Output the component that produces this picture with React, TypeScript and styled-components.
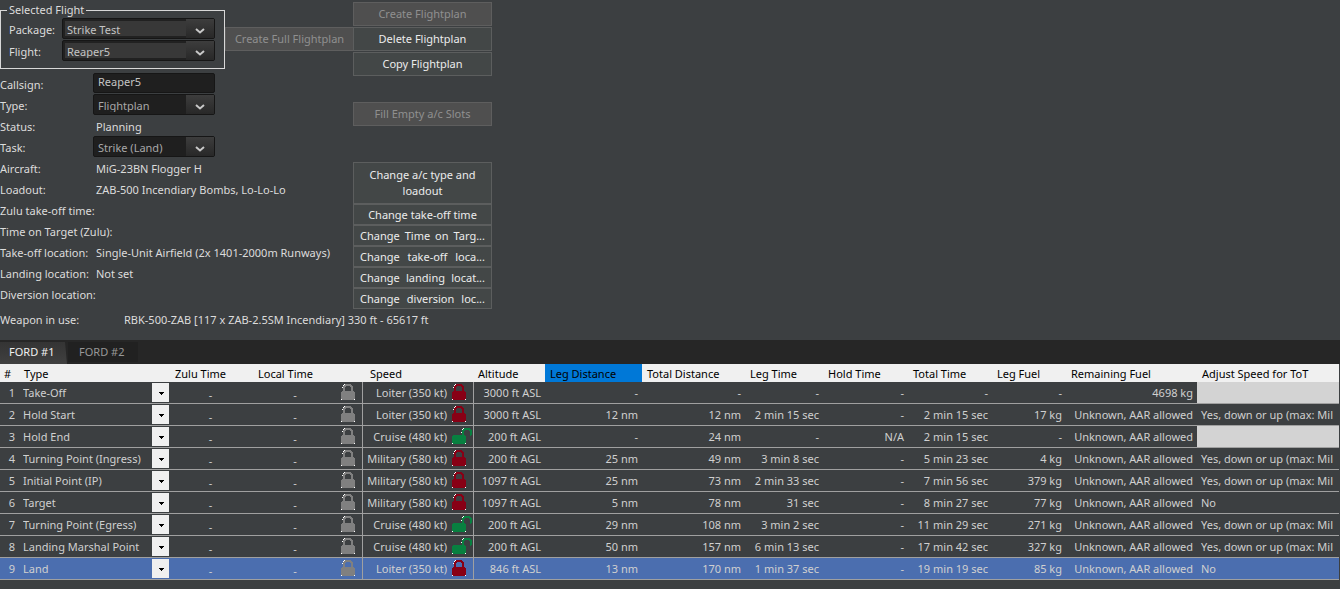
import React, { useState } from "react";
import styled, { createGlobalStyle } from "styled-components";

const color = {
  window: "#3c3f41",
  label: "#dcdcdc",
  cell: "#d0d0d0",
  muted: "#8f8f8f",
  grid: "#a0a0a0",
  selected: "#4b6eaf",
  lockGrey: "#808080",
  lockRed: "#880015",
  lockGreen: "#088040",
};

const Global = createGlobalStyle`
  *, *::before, *::after { box-sizing: border-box; }
  body {
    margin: 0;
    background: ${color.window};
    color: ${color.label};
    font-family: "Noto Sans", "Open Sans", sans-serif;
    font-size: 11px;
    line-height: 21px;
  }
  button, input, select { font: inherit; color: inherit; margin: 0; }
`;

const Page = styled.main`
  min-height: 100vh;
  overflow: hidden;
`;

const Top = styled.section`
  display: flex;
`;

const Details = styled.div`
  width: 353px;
`;

const Selection = styled.div`
  display: flex;
  align-items: flex-start;
  padding-top: 2px;
`;

const Group = styled.fieldset`
  width: 225px;
  margin: 0;
  padding: 0 9px 7px 8px;
  border: 1px solid #d8d8d8;
  display: grid;
  gap: 1px;
`;

const GroupTitle = styled.legend`
  margin-left: -2px;
  padding: 0 2px;
  line-height: 16px;
`;

const GroupRow = styled.div`
  display: grid;
  grid-template-columns: 53px 1fr;
`;

const Label = styled.label`
  line-height: 23px;
  height: 21px;
  white-space: nowrap;
`;

const Combo = styled.div`
  position: relative;
  height: 21px;
`;

const ComboSelect = styled.select<{ $raised?: boolean }>`
  appearance: none;
  display: block;
  width: 100%;
  height: 21px;
  padding: 0 30px 2px 4px;
  border: 1px solid #161616;
  border-radius: 2px;
  outline: 0;
  color: ${(p) => (p.$raised ? "#c4c4c4" : "#a8a8a8")};
  background: ${(p) =>
    p.$raised
      ? "linear-gradient(#383838, #383838) 2px 2px / 130px 15px no-repeat, #212121"
      : "#1f1f1f"};
`;

const ComboArrow = styled.span`
  position: absolute;
  top: 1px;
  right: 1px;
  width: 28px;
  height: 19px;
  display: grid;
  place-items: center;
  padding: 5px 1px 0 0;
  background: linear-gradient(#3d3d3d, #282828);
  pointer-events: none;
`;

const Callsign = styled.input`
  width: 100%;
  height: 20px;
  padding: 0 4px 3px;
  border: 1px solid #161616;
  border-radius: 2px;
  outline: 0;
  color: #c4c4c4;
  background: #1f1f1f;
`;

const Fields = styled.div`
  margin-top: 4px;
`;

const Field = styled.div`
  display: grid;
  grid-template-columns: 93px 122px;
  height: 21px;
`;

const Value = styled.output`
  padding-left: 3px;
  line-height: 23px;
  white-space: nowrap;
`;

const Weapon = styled.div`
  display: grid;
  grid-template-columns: 124px 1fr;
  height: 31px;
  white-space: nowrap;
`;

const Actions = styled.div`
  width: 139px;
  padding-top: 2px;
  display: flex;
  flex-direction: column;
`;

const ActionGroup = styled.div<{ $gap: number; $after?: number }>`
  display: flex;
  flex-direction: column;
  gap: ${(p) => p.$gap}px;
  margin-bottom: ${(p) => p.$after ?? 0}px;
`;

const Button = styled.button<{ $size?: "tall" | "short" }>`
  height: ${(p) => (p.$size === "tall" ? 42 : p.$size === "short" ? 21 : 24)}px;
  padding: 0 7px;
  border: 1px solid #5c5e5e;
  border-radius: 0;
  background: #434747;
  color: #ececec;
  line-height: 16px;
  overflow: hidden;
  &:disabled {
    background: #4f4f4f;
    border-color: #5e5e5e;
    color: ${color.muted};
  }
`;

const FullPlanButton = styled(Button)`
  flex: 1;
  margin-top: 25px;
  border-right: 0;
  padding: 0;
  white-space: nowrap;
`;

const FilledButton = styled(Button)`
  padding: 0 6px;
  text-align: justify;
  text-align-last: justify;
`;

const Tabs = styled.div`
  display: flex;
  align-items: flex-start;
  height: 24px;
  padding-top: 2px;
  background: #262626;
`;

const Tab = styled.button<{ $active: boolean }>`
  width: ${(p) => (p.$active ? 67 : 70)}px;
  height: ${(p) => (p.$active ? 22 : 20)}px;
  margin-right: 1px;
  padding: ${(p) => (p.$active ? "0 0 2px 9px" : "0 0 0 11px")};
  border: 0;
  text-align: left;
  white-space: nowrap;
  line-height: 18px;
  color: ${(p) => (p.$active ? "#f0f0f0" : "#989898")};
  background: ${(p) => (p.$active ? "linear-gradient(#343434, #404040)" : "#212121")};
  clip-path: ${(p) => (p.$active ? "polygon(0 0, 65px 0, 67px 100%, 0 100%)" : "none")};
`;

const TableFrame = styled.div`
  padding-right: 1px;
  overflow: hidden;
`;

const Plan = styled.table`
  width: 100%;
  min-width: 1339px;
  table-layout: fixed;
  border-collapse: separate;
  border-spacing: 0;
`;

const Column = styled.col<{ $width?: number }>`
  width: ${(p) => (p.$width ? `${p.$width}px` : "auto")};
`;

const Head = styled.th<{ $sorted?: boolean; $inset?: number }>`
  height: 18px;
  padding: 1px 0 0 ${(p) => p.$inset ?? 5}px;
  text-align: left;
  font-weight: 400;
  line-height: 17px;
  white-space: nowrap;
  color: #000;
  background: ${(p) => (p.$sorted ? "#0078d7" : "#f0f0f0")};
`;

const Row = styled.tr<{ $selected: boolean }>`
  background: ${(p) => (p.$selected ? color.selected : "transparent")};
  color: ${color.cell};
`;

const Cell = styled.td<{ $align?: "left" | "right"; $blank?: boolean; $ruled?: boolean }>`
  height: 22px;
  padding: ${(p) => (p.$align === "left" ? "0 0 0 4px" : "0 4px 0 0")};
  border-bottom: 1px solid ${color.grid};
  border-right: ${(p) => (p.$ruled ? `1px solid ${color.grid}` : "0")};
  text-align: ${(p) => p.$align ?? "right"};
  line-height: 21px;
  white-space: nowrap;
  overflow: hidden;
  background: ${(p) => (p.$blank ? "#d3d3d3" : "transparent")};
`;

const SpeedCell = styled(Cell)`
  padding-right: 1px;
`;

const ClockCell = styled(Cell)`
  padding-right: 2px;
`;

const TypePicker = styled.div`
  position: relative;
  height: 21px;
`;

const TypeSelect = styled.select`
  appearance: none;
  display: block;
  width: 100%;
  height: 21px;
  padding: 0 18px 0 0;
  border: 0;
  outline: 0;
  background: transparent;
`;

const TypeArrow = styled.span`
  position: absolute;
  top: 1px;
  right: 1px;
  width: 17px;
  height: 19px;
  display: grid;
  place-items: center;
  padding: 2px 0 0 2px;
  background: #f0f0f0;
  pointer-events: none;
`;

const ClockDash = styled.span`
  display: block;
  height: 21px;
  padding-top: 2px;
  text-align: center;
`;

const LocalTime = styled.div`
  display: grid;
  grid-template-columns: 76px 1fr;
  gap: 8px;
  align-items: start;
`;

const Speed = styled.div`
  display: grid;
  grid-template-columns: 1fr 20px;
  gap: 5px;
  align-items: start;
`;

const Icon = styled.svg`
  display: block;
  shape-rendering: crispEdges;
`;

const LockIcon = styled(Icon)`
  margin-top: 2px;
`;

function Chevron() {
  return (
    <svg width="10" height="6" viewBox="0 0 10 6" aria-hidden="true">
      <path d="M1 1 L5 4.5 L9 1" fill="none" stroke="#c8c8c8" strokeWidth="2" />
    </svg>
  );
}

function Triangle() {
  return (
    <Icon width="5" height="3" viewBox="0 0 5 3" aria-hidden="true">
      <path d="M0 0h5v1h-1v1h-1v1h-1v-1h-1v-1h-1z" fill="#000" />
    </Icon>
  );
}

function Lock({ fill }: { fill: string }) {
  return (
    <LockIcon width="20" height="16" viewBox="0 0 20 16" aria-hidden="true">
      <path d="M4 0h6v1h1v1h1v5h1v1h1v7h-1v1H1v-1H0V8h1V7h1V2h1V1h1z M5 2v1H4v4h6V3H9V2z" fill={fill} fillRule="evenodd" />
      <path d="M3 0h1v1H3z M2 1h1v1H2z M1 3h1v1H1z M0 15h1v1H0z M13 15h1v1h-1z" fill="#fff" />
    </LockIcon>
  );
}

function OpenLock() {
  return (
    <LockIcon width="20" height="16" viewBox="0 0 20 16" aria-hidden="true">
      <path
        d="M12 0h6v1h1v1h1v5h-1v1h-1V3h-1V2h-4v1h-1v4h1v1h1v7h-1v1H1v-1H0V8h1V7h9V2h1V1h1z"
        fill={color.lockGreen}
      />
      <path d="M11 0h1v1h-1z M10 1h1v1h-1z M9 4h1v1H9z M0 15h1v1H0z M13 15h1v1h-1z" fill="#fff" />
    </LockIcon>
  );
}

function ComboBox({ id, value, raised }: { id: string; value: string; raised?: boolean }) {
  return (
    <Combo>
      <ComboSelect id={id} $raised={raised} defaultValue={value}>
        <option>{value}</option>
      </ComboSelect>
      <ComboArrow>
        <Chevron />
      </ComboArrow>
    </Combo>
  );
}

const columns: { title: string; width?: number; inset?: number }[] = [
  { title: "#", width: 19, inset: 4 },
  { title: "Type", width: 151 },
  { title: "Zulu Time", width: 83 },
  { title: "Local Time", width: 110 },
  { title: "Speed", width: 111, inset: 7 },
  { title: "Altitude", width: 71, inset: 4 },
  { title: "Leg Distance", width: 97 },
  { title: "Total Distance", width: 103 },
  { title: "Leg Time", width: 78 },
  { title: "Hold Time", width: 85 },
  { title: "Total Time", width: 84 },
  { title: "Leg Fuel", width: 74 },
  { title: "Remaining Fuel", width: 131 },
  { title: "Adjust Speed for ToT" },
];

const adjust = "Yes, down or up (max: Mil";
const unknown = "Unknown, AAR allowed";

// type, speed, altitude, leg distance, total distance, leg time, hold time, total time, leg fuel, remaining, adjust
const waypoints: string[][] = [
  ["Take-Off", "Loiter (350 kt)", "3000 ft ASL", "-", "-", "-", "-", "-", "-", "4698 kg", ""],
  ["Hold Start", "Loiter (350 kt)", "3000 ft ASL", "12 nm", "12 nm", "2 min 15 sec", "-", "2 min 15 sec", "17 kg", unknown, adjust],
  ["Hold End", "Cruise (480 kt)", "200 ft AGL", "-", "24 nm", "-", "N/A", "2 min 15 sec", "-", unknown, ""],
  ["Turning Point (Ingress)", "Military (580 kt)", "200 ft AGL", "25 nm", "49 nm", "3 min 8 sec", "-", "5 min 23 sec", "4 kg", unknown, adjust],
  ["Initial Point (IP)", "Military (580 kt)", "1097 ft AGL", "25 nm", "73 nm", "2 min 33 sec", "-", "7 min 56 sec", "379 kg", unknown, adjust],
  ["Target", "Military (580 kt)", "1097 ft AGL", "5 nm", "78 nm", "31 sec", "-", "8 min 27 sec", "77 kg", unknown, "No"],
  ["Turning Point (Egress)", "Cruise (480 kt)", "200 ft AGL", "29 nm", "108 nm", "3 min 2 sec", "-", "11 min 29 sec", "271 kg", unknown, adjust],
  ["Landing Marshal Point", "Cruise (480 kt)", "200 ft AGL", "50 nm", "157 nm", "6 min 13 sec", "-", "17 min 42 sec", "327 kg", unknown, adjust],
  ["Land", "Loiter (350 kt)", "846 ft ASL", "13 nm", "170 nm", "1 min 37 sec", "-", "19 min 19 sec", "85 kg", unknown, "No"],
];

const facts: [string, string][] = [
  ["Aircraft:", "MiG-23BN Flogger H"],
  ["Loadout:", "ZAB-500 Incendiary Bombs, Lo-Lo-Lo"],
  ["Zulu take-off time:", ""],
  ["Time on Target (Zulu):", ""],
  ["Take-off location:", "Single-Unit Airfield (2x 1401-2000m Runways)"],
  ["Landing location:", "Not set"],
  ["Diversion location:", ""],
];

export default function App() {
  const [tab, setTab] = useState(0);
  const [selected, setSelected] = useState(8);

  return (
    <Page>
      <Global />
      <Top>
        <Details>
          <Selection>
            <Group>
              <GroupTitle>Selected Flight</GroupTitle>
              <GroupRow>
                <Label htmlFor="package">Package:</Label>
                <ComboBox id="package" value="Strike Test" raised />
              </GroupRow>
              <GroupRow>
                <Label htmlFor="flight">Flight:</Label>
                <ComboBox id="flight" value="Reaper5" raised />
              </GroupRow>
            </Group>
            <FullPlanButton disabled>Create Full Flightplan</FullPlanButton>
          </Selection>
          <Fields>
            <Field>
              <Label htmlFor="callsign">Callsign:</Label>
              <Callsign id="callsign" defaultValue="Reaper5" />
            </Field>
            <Field>
              <Label htmlFor="type">Type:</Label>
              <ComboBox id="type" value="Flightplan" />
            </Field>
            <Field>
              <Label htmlFor="status">Status:</Label>
              <Value id="status">Planning</Value>
            </Field>
            <Field>
              <Label htmlFor="task">Task:</Label>
              <ComboBox id="task" value="Strike (Land)" />
            </Field>
            {facts.map(([name, value], i) => (
              <Field key={name}>
                <Label htmlFor={`fact-${i}`}>{name}</Label>
                <Value id={`fact-${i}`}>{value}</Value>
              </Field>
            ))}
          </Fields>
        </Details>
        <Actions>
          <ActionGroup $gap={1} $after={26}>
            <Button disabled>Create Flightplan</Button>
            <Button>Delete Flightplan</Button>
            <Button>Copy Flightplan</Button>
          </ActionGroup>
          <ActionGroup $gap={0} $after={36}>
            <Button disabled>Fill Empty a/c Slots</Button>
          </ActionGroup>
          <ActionGroup $gap={0}>
            <Button $size="tall">Change a/c type and loadout</Button>
            <Button $size="short">Change take-off time</Button>
            <FilledButton $size="short">Change Time on Targ...</FilledButton>
            <FilledButton $size="short">Change take-off loca...</FilledButton>
            <FilledButton $size="short">Change landing locat...</FilledButton>
            <FilledButton $size="short">Change diversion loc...</FilledButton>
          </ActionGroup>
        </Actions>
      </Top>
      <Weapon>
        <span>Weapon in use:</span>
        <span>RBK-500-ZAB [117 x ZAB-2.5SM Incendiary] 330 ft - 65617 ft</span>
      </Weapon>
      <Tabs role="tablist">
        {["FORD #1", "FORD #2"].map((name, i) => (
          <Tab key={name} role="tab" aria-selected={tab === i} $active={tab === i} onClick={() => setTab(i)}>
            {name}
          </Tab>
        ))}
      </Tabs>
      <TableFrame>
        <Plan>
          <colgroup>
            {columns.map((c) => (
              <Column key={c.title} $width={c.width} />
            ))}
          </colgroup>
          <thead>
            <tr>
              {columns.map((c) => (
                <Head key={c.title} scope="col" $inset={c.inset} $sorted={c.title === "Leg Distance"}>
                  {c.title}
                </Head>
              ))}
            </tr>
          </thead>
          <tbody>
            {waypoints.map(([type, speed, altitude, ...rest], i) => {
              const adjustText = rest[rest.length - 1];
              return (
                <Row key={type} $selected={selected === i} onClick={() => setSelected(i)}>
                  <Cell>{i + 1}</Cell>
                  <Cell $align="left">
                    <TypePicker>
                      <TypeSelect aria-label={`Waypoint ${i + 1} type`} defaultValue={type}>
                        <option>{type}</option>
                      </TypeSelect>
                      <TypeArrow>
                        <Triangle />
                      </TypeArrow>
                    </TypePicker>
                  </Cell>
                  <ClockCell>
                    <ClockDash>-</ClockDash>
                  </ClockCell>
                  <Cell $align="left" $ruled>
                    <LocalTime>
                      <ClockDash>-</ClockDash>
                      <Lock fill={color.lockGrey} />
                    </LocalTime>
                  </Cell>
                  <SpeedCell $ruled>
                    <Speed>
                      <span>{speed}</span>
                      {speed.startsWith("Cruise") ? (
                        <OpenLock />
                      ) : (
                        <Lock fill={color.lockRed} />
                      )}
                    </Speed>
                  </SpeedCell>
                  <Cell>{altitude}</Cell>
                  {rest.slice(0, -1).map((text, k) => (
                    <Cell key={k}>{text}</Cell>
                  ))}
                  <Cell $align="left" $blank={adjustText === ""}>
                    {adjustText}
                  </Cell>
                </Row>
              );
            })}
          </tbody>
        </Plan>
      </TableFrame>
    </Page>
  );
}
